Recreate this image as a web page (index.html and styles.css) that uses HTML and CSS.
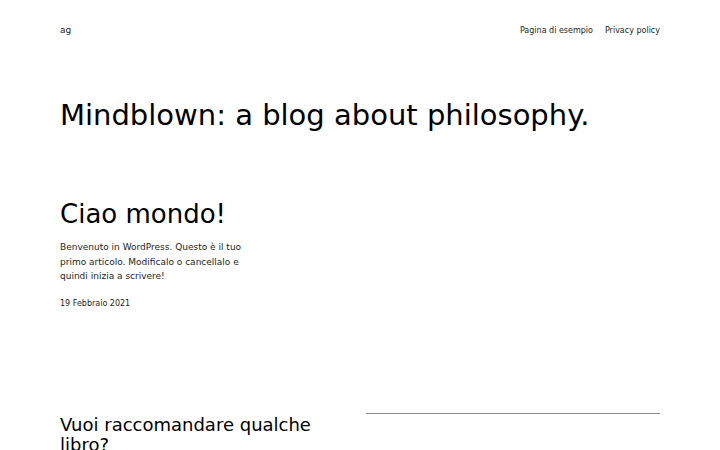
FILE: index.html
```html
<!DOCTYPE html>
<html lang="it">
<head>
<meta charset="utf-8">
<title>Mindblown</title>
<link rel="stylesheet" href="styles.css">
</head>
<body>
<header class="site-header">
  <a class="site-title" href="#">ag</a>
  <nav class="site-nav">
    <a href="#">Pagina di esempio</a>
    <a href="#">Privacy policy</a>
  </nav>
</header>
<main class="main">
  <h1 class="blog-title">Mindblown: a blog about philosophy.</h1>
  <section class="posts-row first">
    <article class="post">
      <h2 class="post-title">Ciao mondo!</h2>
      <p class="excerpt">Benvenuto in WordPress. Questo è il tuo primo articolo. Modificalo o cancellalo e quindi inizia a scrivere!</p>
      <p class="date">19 Febbraio 2021</p>
    </article>
  </section>
  <section class="posts-row second">
    <article class="post wide">
      <h2 class="post-title small">Vuoi raccomandare qualche libro?</h2>
    </article>
    <div class="side">
      <hr class="sep">
    </div>
  </section>
</main>
</body>
</html>
```
FILE: styles.css
```css
html, body {
  margin: 0;
  padding: 0;
  background: #ffffff;
  color: #000000;
  font-family: "DejaVu Sans", sans-serif;
}
a {
  color: inherit;
  text-decoration: none;
}
.site-header {
  display: flex;
  justify-content: space-between;
  align-items: center;
  padding: 24px 60px 0 60px;
  height: 12px;
  font-size: 9px;
  color: #1e1e1e;
}
.site-nav {
  display: flex;
  gap: 12px;
  font-size: 8px;
}
.main {
  padding: 0 60px;
}
.blog-title {
  margin: 61px 0 0 0;
  font-size: 29px;
  font-weight: 400;
  line-height: 36px;
}
.posts-row {
  display: grid;
  gap: 12px;
}
.posts-row.first {
  grid-template-columns: 192px;
  margin-top: 65px;
}
.posts-row.second {
  grid-template-columns: 294px 294px;
  margin-top: 103px;
}
.post-title {
  margin: 0;
  font-size: 26px;
  font-weight: 400;
  line-height: 32px;
}
.post-title.small {
  padding-top: 2px;
  font-size: 18px;
  line-height: 20px;
}
.excerpt {
  margin: 10px 0 0 0;
  font-size: 9px;
  line-height: 14.5px;
  color: #1e1e1e;
}
.date {
  margin: 14px 0 0 0;
  font-size: 8px;
  line-height: 12px;
  color: #1e1e1e;
}
.sep {
  margin: 0;
  border: 0;
  border-top: 1px solid #8a8a8a;
}
```
